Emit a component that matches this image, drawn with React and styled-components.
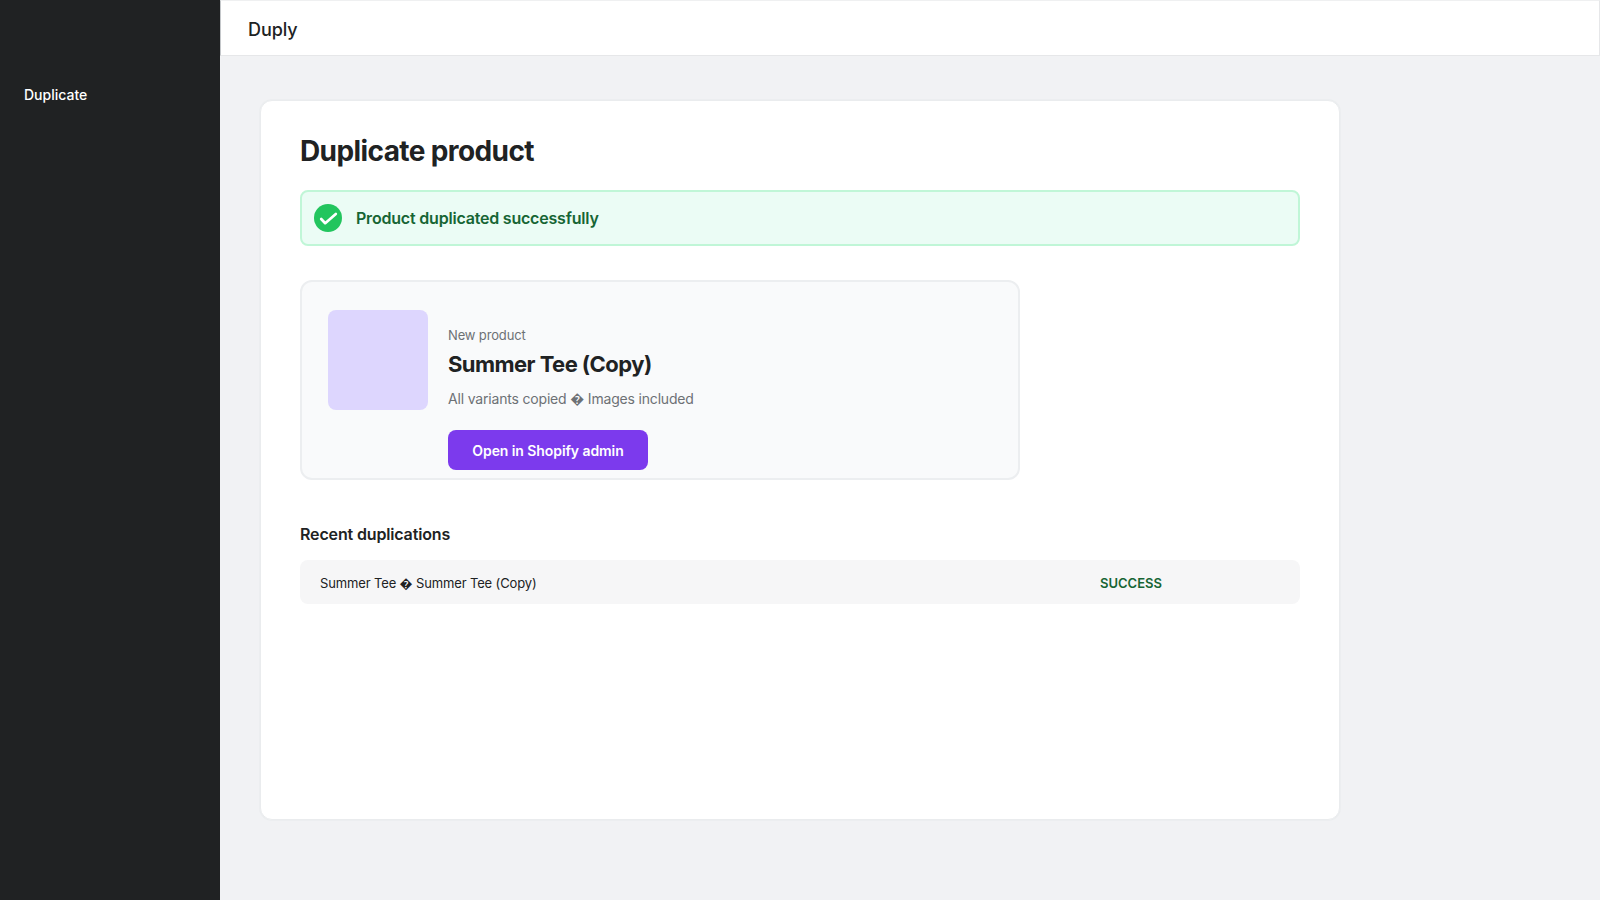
import React from "react";
import styled, { createGlobalStyle } from "styled-components";

const Global = createGlobalStyle`
  * { box-sizing: border-box; }
  html, body { margin: 0; padding: 0; height: 100%; }
  body { font-family: Inter, "Noto Sans", "Liberation Sans", sans-serif; color: #202223; background: #f1f2f4; }
`;

const Shell = styled.div`
  display: flex;
  width: 100%;
  height: 900px;
  overflow: hidden;
`;
const Sidebar = styled.aside`
  flex: 0 0 220px;
  background: #202223;
  padding: 86px 24px 0;
`;
const NavItem = styled.div`
  color: #fff;
  font-size: 14px;
  font-weight: 500;
  line-height: 17px;
`;
const Main = styled.main`
  flex: 1;
  min-width: 0;
  display: flex;
  flex-direction: column;
`;
const TopBar = styled.header`
  height: 56px;
  background: #fff;
  border: 1px solid #e6e7e9;
  border-top-color: #eff0f1;
  border-left-color: #c4c7ca;
  padding: 2px 27px 0;
  display: flex;
  align-items: center;
  font-size: 18px;
  font-weight: 500;
  letter-spacing: -0.08px;
`;
const Content = styled.div`
  padding: 44px 40px 0;
`;
const Card = styled.section`
  width: 1080px;
  height: 720px;
  background: #fff;
  border: 1px solid #eaecee;
  box-shadow: 0 0 0 1px #eceef0;
  border-radius: 12px;
  padding: 33px 39px 0;
`;
const Title = styled.h1`
  margin: 0;
  font-size: 28px;
  line-height: 34px;
  font-weight: 700;
  letter-spacing: -0.6px;
`;
const Alert = styled.div`
  margin-top: 22px;
  height: 56px;
  display: flex;
  align-items: center;
  gap: 14px;
  padding: 0 12px;
  background: #ebfcf5;
  border: 2px solid #c0f6d7;
  border-radius: 8px;
  color: #166534;
  font-size: 16px;
  font-weight: 600;
  letter-spacing: -0.2px;
`;
const CheckIcon = styled.svg`
  width: 28px;
  height: 28px;
  flex: none;
`;
const Product = styled.div`
  margin-top: 34px;
  width: 720px;
  height: 200px;
  display: flex;
  gap: 20px;
  padding: 28px 26px 0;
  background: #f9fafb;
  border: 2px solid #eceef0;
  border-radius: 12px;
`;
const Thumb = styled.div`
  width: 100px;
  height: 100px;
  flex: none;
  background: #ddd6fe;
  border-radius: 8px;
`;
const Info = styled.div`
  display: flex;
  flex-direction: column;
  align-items: flex-start;
  padding-top: 17px;
`;
const Eyebrow = styled.div`
  font-size: 13px;
  line-height: 16px;
  color: #6d7175;
  letter-spacing: -0.15px;
`;
const ProductName = styled.div`
  margin-top: 8px;
  font-size: 22px;
  line-height: 27px;
  font-weight: 700;
  letter-spacing: -0.55px;
`;
const Meta = styled.div`
  margin-top: 12px;
  font-size: 14px;
  line-height: 17px;
  color: #6d7175;
  letter-spacing: -0.18px;
`;
const Button = styled.button`
  margin-top: 23px;
  width: 200px;
  height: 40px;
  border: 0;
  border-radius: 8px;
  background: #7c3aed;
  color: #fff;
  font: 600 14px Inter, sans-serif;
  letter-spacing: -0.08px;
  padding: 1px 0 0;
`;
const SectionTitle = styled.h2`
  margin: 44px 0 0;
  font-size: 16px;
  line-height: 20px;
  font-weight: 600;
  letter-spacing: -0.15px;
`;
const Row = styled.div`
  margin-top: 16px;
  height: 44px;
  display: grid;
  grid-template-columns: 1fr 180px;
  align-items: center;
  padding: 2px 20px 0;
  background: #f6f6f7;
  border-radius: 8px;
  font-size: 13px;
`;
const RowText = styled.span`
  letter-spacing: -0.14px;
`;
const Status = styled.span`
  color: #166534;
  font-weight: 600;
`;

export default function App() {
  return (
    <>
      <Global />
      <Shell>
        <Sidebar>
          <NavItem>Duplicate</NavItem>
        </Sidebar>
        <Main>
          <TopBar>Duply</TopBar>
          <Content>
            <Card>
              <Title>Duplicate product</Title>
              <Alert>
                <CheckIcon viewBox="0 0 28 28" aria-hidden="true">
                  <circle cx="14" cy="14" r="14" fill="#22c55e" />
                  <path d="M7.2 15l4 4.2L21.8 10" fill="none" stroke="#fff" strokeWidth="2.7" strokeLinecap="round" strokeLinejoin="round" />
                </CheckIcon>
                Product duplicated successfully
              </Alert>
              <Product>
                <Thumb />
                <Info>
                  <Eyebrow>New product</Eyebrow>
                  <ProductName>Summer Tee (Copy)</ProductName>
                  <Meta>All variants copied {"\uFFFD"} Images included</Meta>
                  <Button>Open in Shopify admin</Button>
                </Info>
              </Product>
              <SectionTitle>Recent duplications</SectionTitle>
              <Row>
                <RowText>Summer Tee {"\uFFFD"} Summer Tee (Copy)</RowText>
                <Status>SUCCESS</Status>
              </Row>
            </Card>
          </Content>
        </Main>
      </Shell>
    </>
  );
}
